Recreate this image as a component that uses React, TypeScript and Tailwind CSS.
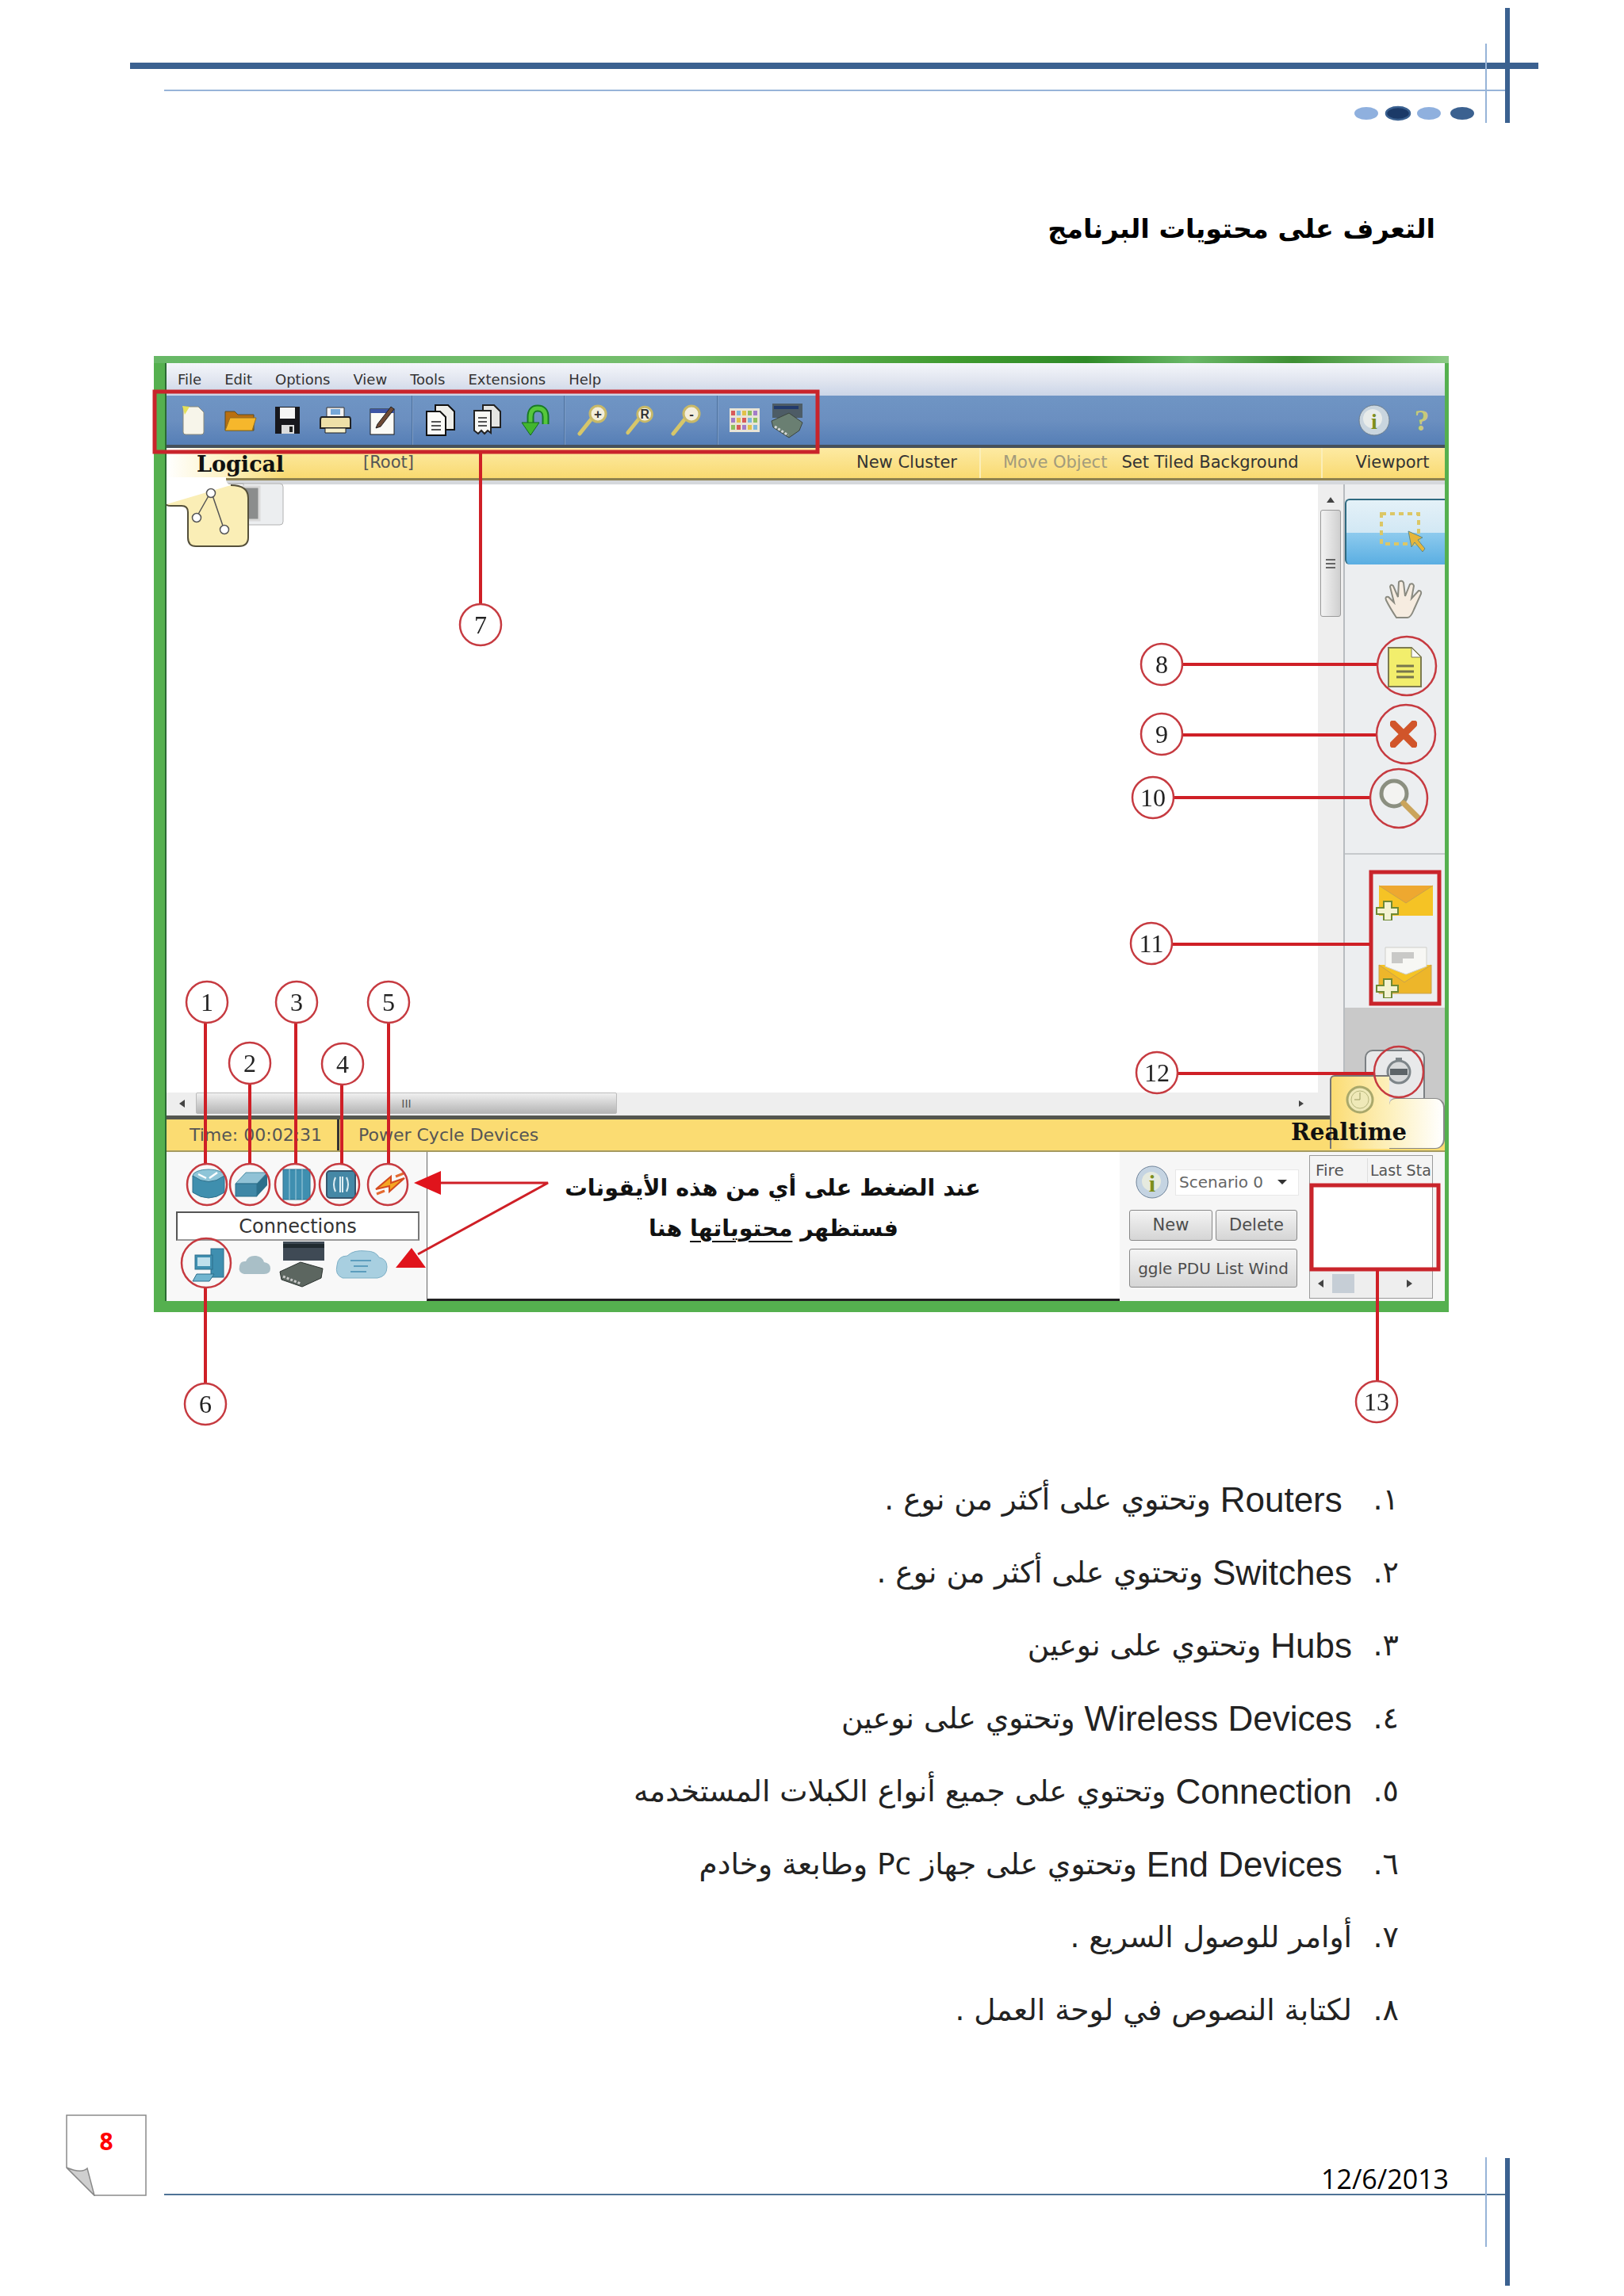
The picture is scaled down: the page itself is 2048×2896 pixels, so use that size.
import React from "react";

const F = ({ c = "", children, v }: { c?: string; children: React.ReactNode; v: string }) => (
  <svg viewBox={v} className={"shrink-0 " + c}>{children}</svg>
);

const Sep = ({ c }: { c: string }) => <div className={"w-[2px] h-full shrink-0 bg-[#4c719f] border-r border-[#7d9cc5] " + c} />;

function Zoomer({ sign, c }: { sign: string; c: string }) {
  return (
    <F v="0 0 43 40" c={c}>
      <path d="M4 37 L20 17" stroke="#d6c66a" strokeWidth="5" strokeLinecap="round" />
      <circle cx="27" cy="12" r="10" fill="#f3eedc" stroke="#c8b968" strokeWidth="3" />
      <text x="27" y="18" textAnchor="middle" fontSize="17" fontWeight="700" fill="#333" fontFamily="Liberation Sans">{sign}</text>
    </F>
  );
}

function Toolbar() {
  return (
    <div className="h-[66px] shrink-0 flex items-center bg-gradient-to-b from-[#6f95c4] via-[#6b8fc0] to-[#567fb6] border-b-[4px] border-[#46505a]">
      <F v="0 0 31 38" c="w-[31px] h-[38px] ml-[18px]">
        <path d="M3 2 H22 L29 9 V34 Q29 37 26 37 H6 Q3 37 3 34 Z" fill="#f7f5ea" stroke="#8a8a7a" />
        <path d="M2 1 L11 2 L5 12 Z" fill="#e4e05a" />
      </F>
      <F v="0 0 42 34" c="w-[42px] h-[34px] ml-[23px]">
        <path d="M2 6 H14 L18 10 H38 V30 H2 Z" fill="#b86f10" stroke="#5d4a20" />
        <path d="M2 30 L8 14 H41 L36 30 Z" fill="#f6b72c" stroke="#94701f" />
      </F>
      <F v="0 0 33 36" c="w-[33px] h-[36px] ml-[22px]">
        <path d="M1 1 H32 V35 H1 Z" fill="#17171c" />
        <path d="M7 2 H26 V16 H7 Z" fill="#f4f4f4" />
        <path d="M9 24 H25 V35 H9 Z" fill="#dcdcdc" />
        <rect x="19" y="26" width="4" height="7" fill="#222" />
      </F>
      <F v="0 0 40 36" c="w-[40px] h-[36px] ml-[24px]">
        <path d="M9 2 H31 V14 H9 Z" fill="#f2f2f2" stroke="#333" />
        <rect x="14" y="4" width="12" height="7" fill="#76a8d8" />
        <path d="M3 14 H37 Q39 14 39 18 V28 H1 V18 Q1 14 3 14 Z" fill="#eee0a8" stroke="#222" strokeWidth="2" />
        <path d="M7 28 H33 V34 H7 Z" fill="#f6f0cc" stroke="#222" />
      </F>
      <F v="0 0 32 38" c="w-[32px] h-[38px] ml-[23px]">
        <rect x="1" y="5" width="30" height="32" fill="#fbfbf6" stroke="#1a1a1a" />
        <rect x="1" y="5" width="30" height="5" fill="#3d55a5" />
        <path d="M10 24 L27 2 L31 5 L14 27 L8 29 Z" fill="#6e4a35" stroke="#222" />
      </F>
      <Sep c="ml-[21px]" />
      <F v="0 0 40 42" c="w-[40px] h-[42px] ml-[14px]">
        <path d="M14 2 H30 L38 10 V33 H14 Z" fill="#eeeeea" stroke="#111" strokeWidth="2" />
        <path d="M3 10 H20 L27 17 V40 H3 Z" fill="#fbfbf8" stroke="#111" strokeWidth="2" />
        <path d="M9 23 H21 M9 28 H21 M9 33 H21" stroke="#555" strokeWidth="2" />
      </F>
      <F v="0 0 38 42" c="w-[38px] h-[42px] ml-[20px]">
        <path d="M14 2 H28 L36 10 V30 H14 Z" fill="#e5e5e2" stroke="#222" strokeWidth="2" />
        <path d="M3 9 H24 V37 L20 34 L16 38 L12 34 L8 38 L3 34 Z" fill="#f8f8f5" stroke="#222" strokeWidth="2" />
        <path d="M8 18 H19 M8 23 H19 M8 28 H19" stroke="#555" strokeWidth="2" />
      </F>
      <F v="0 0 40 42" c="w-[40px] h-[42px] ml-[23px]">
        <path d="M13 29 V17 Q13 6 22 6 Q32 6 32 17 V26" fill="none" stroke="#177a25" strokeWidth="9" />
        <path d="M13 29 V17 Q13 6 22 6 Q32 6 32 17 V26" fill="none" stroke="#56c73c" strokeWidth="5" />
        <path d="M2 24 H24 L13 40 Z" fill="#42b52f" stroke="#146b20" />
      </F>
      <Sep c="ml-[15px]" />
      <Zoomer sign="+" c="w-[43px] h-[40px] ml-[14px]" />
      <Zoomer sign="R" c="w-[40px] h-[40px] ml-[18px]" />
      <Zoomer sign="-" c="w-[43px] h-[40px] ml-[17px]" />
      <Sep c="ml-[16px]" />
      <F v="0 0 38 30" c="w-[38px] h-[30px] ml-[14px]">
        <rect width="38" height="30" fill="#e8e4d6" />
        {["#d85a5a", "#7db7dc", "#e0c24a", "#8fbf5f", "#a37cc9"].map((col, i) => (
          <g key={i}>
            <rect x={2 + i * 7} y="3" width="5" height="6" fill={col} />
            <rect x={2 + i * 7} y="12" width="5" height="6" fill={["#a37cc9", "#e0c24a", "#d85a5a", "#7db7dc", "#8fbf5f"][i]} />
            <rect x={2 + i * 7} y="21" width="5" height="6" fill={["#8fbf5f", "#d85a5a", "#a37cc9", "#e0c24a", "#7db7dc"][i]} />
          </g>
        ))}
      </F>
      <F v="0 0 43 46" c="w-[43px] h-[46px] ml-[13px]">
        <path d="M3 2 H41 V20 H3 Z" fill="#4d5c66" />
        <path d="M5 5 H36 V9 H5 Z" fill="#223a6b" />
        <path d="M2 24 L24 14 L41 26 L37 36 L24 45 L4 32 Z" fill="#6a7f72" stroke="#3b453f" />
        <path d="M6 31 L23 42" stroke="#d8d8d8" strokeWidth="3" strokeDasharray="3 2" />
      </F>
      <F v="0 0 40 40" c="w-[40px] h-[40px] ml-auto">
        <circle cx="20" cy="20" r="19" fill="#c9d5de" stroke="#6b7d8d" />
        <circle cx="18" cy="18" r="12" fill="#e8ecea" />
        <text x="20" y="31" textAnchor="middle" fontSize="28" fontWeight="700" fill="#7d8f1c" fontFamily="Liberation Serif">i</text>
      </F>
      <span className="ml-[26px] mr-[15px] w-[28px] text-center font-['Liberation_Serif'] font-bold text-[38px] leading-none text-[#c7c97a]">?</span>
    </div>
  );
}

function Sidebar() {
  return (
    <div className="w-[128px] shrink-0 flex flex-col bg-[#eceef0] border-l-2 border-[#b8bcc0]">
      <div className="mt-[18px] h-[83px] shrink-0 bg-[linear-gradient(#e4f1f8_0%,#d2e8f4_50%,#8ecbee_50%,#5aaee2_100%)] rounded-tl-[6px] rounded-bl-[6px] border-t-2 border-l-2 border-[#2f6a80] flex items-center">
        <F v="0 0 58 52" c="w-[58px] h-[52px] ml-[42px]">
          <rect x="2" y="2" width="47" height="38" fill="none" stroke="#dcc766" strokeWidth="4" strokeDasharray="6 5" />
          <path d="M36 24 L40 44 L44 38 L54 50 L57 46 L48 35 L54 32 Z" fill="#e6b63a" stroke="#5d8a8d" />
        </F>
      </div>
      <F v="0 0 53 50" c="w-[53px] h-[50px] ml-[49px] mt-[19px]">
        <path d="M16 48 Q8 36 3 26 Q1 21 6 22 L13 29 L8 9 Q9 5 12 8 L18 22 L19 3 Q23 0 25 4 L27 21 L33 6 Q37 4 38 8 L35 24 L44 14 Q48 14 47 18 L38 38 Q34 48 30 48 Z" fill="#f6ece0" stroke="#8a8a80" strokeWidth="2" />
      </F>
      <F v="0 0 43 51" c="w-[43px] h-[51px] ml-[54px] mt-[35px]">
        <path d="M1 1 H30 L42 13 V50 H1 Z" fill="#f2ee6c" stroke="#7d7b50" strokeWidth="2" />
        <path d="M30 1 V13 H42 Z" fill="#fafafa" stroke="#7d7b50" />
        <path d="M11 24 H33 M11 31 H33 M11 38 H33" stroke="#77764d" strokeWidth="3" />
      </F>
      <F v="0 0 34 34" c="w-[34px] h-[34px] ml-[57px] mt-[42px]">
        <path d="M4 4 L30 30 M30 4 L4 30" stroke="#d1552a" strokeWidth="9" strokeLinecap="round" />
      </F>
      <F v="0 0 54 54" c="w-[54px] h-[54px] ml-[42px] mt-[38px]">
        <circle cx="20" cy="20" r="16" fill="#f3f3f1" stroke="#8b8f80" strokeWidth="5" />
        <path d="M32 32 L50 50" stroke="#caa45b" strokeWidth="7" strokeLinecap="round" />
      </F>
      <div className="mt-[41px] h-[2px] shrink-0 bg-[#c6c9cc]" />
      <F v="0 0 72 46" c="w-[72px] h-[46px] ml-[39px] mt-[37px]">
        <rect x="4" y="2" width="68" height="38" fill="#f5c325" />
        <path d="M4 2 L38 24 L72 2" fill="#eea830" stroke="#caa24b" />
        <path d="M10 22 H20 V30 H28 V38 H20 V46 H10 V38 H1 V30 H10 Z" fill="#f3f2d2" stroke="#6f8a34" strokeWidth="2" />
      </F>
      <F v="0 0 72 66" c="w-[72px] h-[66px] ml-[39px] mt-[32px]">
        <rect x="4" y="24" width="66" height="36" fill="#f5c325" />
        <path d="M4 24 L36 46 L70 24 L70 60 L4 60 Z" fill="#edb62a" stroke="#caa24b" />
        <path d="M12 2 H64 V26 L38 36 L12 26 Z" fill="#f7f7f4" stroke="#cfcfca" />
        <path d="M20 8 H48 V16 H34 V22 H20 Z" fill="#c9c9c7" />
        <path d="M10 42 H20 V50 H28 V58 H20 V66 H10 V58 H1 V50 H10 Z" fill="#f3f2d2" stroke="#6f8a34" strokeWidth="2" />
      </F>
      <div className="mt-[12px] flex-1 bg-[#c9c9c9] overflow-hidden">
        <div className="mt-[53px] ml-[25px] w-[76px] h-[70px] rounded-[10px] border-2 border-[#7b8083] bg-[#e8e9ea] flex justify-center pt-[6px]">
          <F v="0 0 40 40" c="w-[40px] h-[40px] ml-[10px]">
            <circle cx="20" cy="20" r="14" fill="#d8dadb" stroke="#7d8589" strokeWidth="3" />
            <rect x="9" y="16" width="22" height="8" fill="#5d6468" />
            <rect x="16" y="2" width="8" height="5" fill="#7d8589" />
          </F>
        </div>
      </div>
    </div>
  );
}

function Canvas() {
  return (
    <div className="flex-1 flex flex-col min-w-0">
      <div className="flex-1 flex min-h-0">
        <div className="relative flex-1 bg-white">
          <F v="0 0 152 90" c="absolute left-[-3px] top-[-9px] w-[152px] h-[90px]">
            <path d="M78 8 H146 Q150 8 150 12 V56 Q150 60 146 60 H100 V8 Z" fill="#eceef0" stroke="#b2b2b2" />
            <rect x="84" y="12" width="36" height="42" fill="#8b8d8d" stroke="#dadada" strokeWidth="3" />
            <path d="M3 0 H78 V2 Q78 8 84 10 Q106 10 106 26 V76 Q106 87 94 87 H40 Q30 87 30 76 V44 Q30 36 22 36 H8 Q3 36 3 28 Z" fill="#fff" stroke="none" />
            <path d="M3 34 Q3 36 8 36 H22 Q30 36 30 44 V76 Q30 87 40 87 H94 Q106 87 106 76 V26 Q106 10 84 10" fill="#faeeb6" stroke="#55503a" strokeWidth="2" />
            <path d="M58 20 L41 50 M60 20 L75 64" stroke="#555" strokeWidth="1.5" />
            <circle cx="59" cy="20" r="5.5" fill="#fff" stroke="#555" strokeWidth="1.5" />
            <circle cx="41" cy="51" r="5.5" fill="#fff" stroke="#555" strokeWidth="1.5" />
            <circle cx="76" cy="66" r="5.5" fill="#fff" stroke="#555" strokeWidth="1.5" />
          </F>
        </div>
        <div className="w-[32px] shrink-0 bg-[#eeeeee] flex flex-col items-center">
          <span className="mt-[16px] h-0 w-0 border-x-[5px] border-b-[7px] border-x-transparent border-b-[#444]" />
          <div className="mt-[9px] w-[26px] h-[135px] rounded-[3px] border border-[#9a9a9a] bg-gradient-to-r from-[#f4f4f4] to-[#cfcfcf] flex flex-col items-center justify-center gap-[3px]">
            <span className="w-[12px] h-[2px] bg-[#666]" />
            <span className="w-[12px] h-[2px] bg-[#666]" />
            <span className="w-[12px] h-[2px] bg-[#666]" />
          </div>
        </div>
      </div>
      <div className="h-[27px] shrink-0 bg-[#eeeeee] flex items-center relative">
        <span className="ml-[16px] h-0 w-0 border-y-[5px] border-r-[7px] border-y-transparent border-r-[#444]" />
        <div className="ml-[14px] w-[531px] h-full bg-gradient-to-b from-[#f0f0f0] to-[#b5b5b5] border border-[#bbbbbb] rounded-[2px] flex items-center justify-center text-[14px] leading-none text-[#555] font-['DejaVu_Sans']">III</div>
        <span className="ml-[860px] h-0 w-0 border-y-[4px] border-l-[6px] border-y-transparent border-l-[#444]" />
      </div>
      <div className="h-[2px] shrink-0 bg-[#eeeeee]" />
      <div className="h-[5px] shrink-0 bg-[#555750]" />
    </div>
  );
}

function DevicePanel() {
  return (
    <div className="w-[328px] shrink-0 bg-[#f8f8f8] flex flex-col">
      <div className="flex items-center mt-[20px] h-[42px] shrink-0">
        <F v="0 0 42 40" c="w-[42px] h-[40px] ml-[32px]">
          <ellipse cx="21" cy="9" rx="20" ry="8" fill="#8ec5d8" stroke="#4f8fa6" />
          <path d="M1 9 V30 Q21 44 41 30 V9 Q21 24 1 9 Z" fill="#3f8fae" stroke="#2c6f8b" />
          <path d="M8 7 L18 12 M32 5 L22 12" stroke="#fff" strokeWidth="2.5" />
        </F>
        <F v="0 0 42 34" c="w-[42px] h-[34px] ml-[12px]">
          <path d="M14 2 H41 L28 16 H1 Z" fill="#91c2d6" stroke="#4f8fa6" />
          <path d="M1 16 H28 V32 H1 Z" fill="#3f87a6" stroke="#2c6f8b" />
          <path d="M28 16 L41 2 V18 L28 32 Z" fill="#2c6f8b" />
        </F>
        <F v="0 0 42 42" c="w-[42px] h-[42px] ml-[15px]">
          <rect x="4" y="2" width="34" height="38" fill="#3f8fb0" stroke="#2c6f8b" />
          <path d="M12 2 V40 M20 2 V40 M28 2 V40" stroke="#83b9cd" strokeWidth="1.5" />
        </F>
        <F v="0 0 42 40" c="w-[42px] h-[40px] ml-[14px]">
          <rect x="3" y="3" width="36" height="34" rx="4" fill="#4588a6" stroke="#35566e" strokeWidth="2" />
          <path d="M14 11 Q10 20 14 29 M28 11 Q32 20 28 29" fill="none" stroke="#dfeef4" strokeWidth="2" />
          <path d="M20 10 V30 M23 10 V30" stroke="#dfeef4" strokeWidth="2" />
        </F>
        <F v="0 0 42 36" c="w-[42px] h-[36px] ml-[20px]">
          <path d="M3 24 L22 8 L22 16 L39 10 L20 27 L20 20 Z" fill="#f5a623" stroke="#d44a20" strokeWidth="2" />
          <path d="M4 30 L14 26 M28 8 L38 4" stroke="#e46a30" strokeWidth="3" />
        </F>
      </div>
      <div className="mt-[13px] ml-[12px] w-[307px] h-[37px] shrink-0 border-2 border-[#555] border-b-[#999] border-r-[#777] bg-white flex items-center justify-center font-['DejaVu_Sans'] text-[24px] text-[#333]">Connections</div>
      <div className="flex items-center mt-[1px]">
        <F v="0 0 44 44" c="w-[44px] h-[44px] ml-[32px]">
          <rect x="24" y="2" width="16" height="36" fill="#3f8fb0" stroke="#2c6f8b" />
          <rect x="4" y="10" width="22" height="18" fill="#3f8fb0" stroke="#2c6f8b" />
          <rect x="7" y="13" width="16" height="11" fill="#bfe0ec" />
          <path d="M6 34 H28 L22 43 H1 Z" fill="#72b6d0" stroke="#2c6f8b" />
        </F>
        <F v="0 0 42 28" c="w-[42px] h-[28px] ml-[14px]">
          <path d="M8 26 Q0 24 2 16 Q3 9 10 10 Q13 2 23 3 Q31 4 33 11 Q41 12 41 19 Q41 26 33 26 Z" fill="#a9bfc7" />
        </F>
        <F v="0 0 61 58" c="w-[61px] h-[58px] ml-[9px]">
          <rect x="6" y="0" width="52" height="24" fill="#3f4a55" />
          <rect x="6" y="3" width="52" height="5" fill="#202a30" />
          <path d="M2 38 L28 26 L56 34 L54 46 L30 57 L4 48 Z" fill="#5c6660" stroke="#2c3330" />
          <path d="M6 44 L28 53" stroke="#c8c8c8" strokeWidth="3" strokeDasharray="3 2" />
        </F>
        <F v="0 0 67 38" c="w-[67px] h-[38px] ml-[10px]">
          <path d="M10 36 Q0 32 3 20 Q4 8 16 8 Q24 0 40 2 Q52 2 56 10 Q66 12 66 22 Q66 34 54 36 Z" fill="#a8cfe0" stroke="#7fb0c6" />
          <path d="M20 14 H46 M24 21 H42 M20 28 H40" stroke="#5c9dbd" strokeWidth="2" />
        </F>
      </div>
    </div>
  );
}

function ScenarioPanel() {
  return (
    <div className="w-[235px] shrink-0 bg-[#f6f6f6] flex flex-col pl-[12px] font-['DejaVu_Sans'] text-[#4d4d4d]">
      <div className="flex items-center mt-[17px] h-[42px]">
        <F v="0 0 43 42" c="w-[43px] h-[42px] ml-[8px]">
          <circle cx="21" cy="21" r="20" fill="#c5d4e2" stroke="#70849a" />
          <circle cx="20" cy="20" r="12" fill="#e6eadf" />
          <text x="21" y="33" textAnchor="middle" fontSize="30" fontWeight="700" fill="#7d8f1c" fontFamily="Liberation Serif">i</text>
        </F>
        <div className="ml-[7px] w-[156px] h-[33px] bg-white border border-[#e8e8e8] flex items-center pl-[4px] text-[20px] whitespace-nowrap">
          <span className="text-[#666]">Scenario 0</span>
          <span className="ml-[18px] h-0 w-0 border-x-[6px] border-t-[6px] border-x-transparent border-t-[#333]" />
        </div>
      </div>
      <div className="flex mt-[14px] gap-[4px]">
        <div className="w-[105px] h-[39px] rounded-[3px] border border-[#888] bg-gradient-to-b from-[#f4f4f4] to-[#d5d5d5] flex items-center justify-center text-[21px]">New</div>
        <div className="w-[103px] h-[39px] rounded-[3px] border border-[#888] bg-gradient-to-b from-[#f4f4f4] to-[#d5d5d5] flex items-center justify-center text-[21px]">Delete</div>
      </div>
      <div className="mt-[10px] w-[212px] h-[49px] rounded-[3px] border border-[#888] bg-gradient-to-b from-[#f4f4f4] to-[#d5d5d5] flex items-center justify-center text-[20px] whitespace-nowrap">ggle PDU List Wind</div>
    </div>
  );
}

function PduTable() {
  return (
    <div className="flex-1 bg-[#f6f6f6] pl-[4px] pr-[15px] pt-[4px] pb-[3px] min-w-0">
      <div className="h-full border border-[#9a9a9a] bg-white flex flex-col font-['DejaVu_Sans'] text-[19px] text-[#555]">
        <div className="h-[36px] shrink-0 bg-[#f4f4f4] flex items-center whitespace-nowrap">
          <span className="ml-[7px] w-[66px] shrink-0 border-r border-[#ddd] text-[20px]">Fire</span>
          <span className="ml-[3px]">Last Sta</span>
        </div>
        <div className="flex-1" />
        <div className="h-[36px] shrink-0 bg-[#eeeeee] flex items-center">
          <span className="ml-[10px] h-0 w-0 border-y-[5px] border-r-[7px] border-y-transparent border-r-[#444]" />
          <span className="ml-[11px] w-[28px] h-[24px] bg-[#c6ced6]" />
          <span className="ml-[66px] h-0 w-0 border-y-[5px] border-l-[7px] border-y-transparent border-l-[#444]" />
        </div>
      </div>
    </div>
  );
}

const badges: [number, number, string][] = [
  [606, 788, "7"], [1465, 838, "8"], [1465, 926, "9"], [1454, 1006, "10"], [1452, 1190, "11"], [1459, 1353, "12"],
  [261, 1264, "1"], [315, 1341, "2"], [374, 1264, "3"], [432, 1342, "4"], [490, 1264, "5"], [259, 1771, "6"], [1736, 1768, "13"],
];

function Overlay() {
  return (
    <svg viewBox="194 449 1633 1352" className="absolute left-0 top-0 w-[1633px] h-[1352px] pointer-events-none overflow-visible">
      <g fill="none" stroke="#c9242b" strokeWidth="5">
        <rect x="195" y="494" width="836" height="76" />
        <rect x="1729" y="1100" width="86" height="166" />
        <rect x="1654" y="1495" width="160" height="106" />
      </g>
      <g stroke="#cf1f26" strokeWidth="4">
        <path d="M606 570 V762 M1490 838 H1737 M1490 927 H1737 M1479 1006 H1728 M1478 1191 H1728 M1485 1354 H1733" />
        <path d="M259 1290 V1468 M315 1366 V1468 M373 1290 V1468 M431 1368 V1468 M490 1290 V1468 M259 1624 V1744 M1737 1601 V1744" />
        <path d="M556 1492 H691 L527 1582" fill="none" strokeWidth="3" />
      </g>
      <path d="M522 1492 L556 1477 V1507 Z M519 1574 L499 1599 H537 Z" fill="#e0141c" />
      <g fill="none" stroke="#c63a40" strokeWidth="2.5">
        <ellipse cx="1774" cy="840" rx="37" ry="37" />
        <ellipse cx="1773" cy="926" rx="37" ry="37" />
        <ellipse cx="1764" cy="1007" rx="36" ry="37" />
        <ellipse cx="1764" cy="1352" rx="31" ry="32" />
        <ellipse cx="261" cy="1494" rx="25" ry="26" />
        <ellipse cx="315" cy="1494" rx="25" ry="26" />
        <ellipse cx="372" cy="1494" rx="25" ry="26" />
        <ellipse cx="428" cy="1494" rx="25" ry="26" />
        <ellipse cx="489" cy="1494" rx="25" ry="26" />
        <ellipse cx="260" cy="1593" rx="31" ry="31" />
      </g>
      {badges.map(([x, y, t]) => (
        <g key={t}>
          <ellipse cx={x} cy={y} rx="26" ry="26" fill="#fff" stroke="#c63a40" strokeWidth="2.5" />
          <text x={x} y={y + 11} textAnchor="middle" fontSize="32" fill="#222" fontFamily="Liberation Serif">{t}</text>
        </g>
      ))}
    </svg>
  );
}

function Figure() {
  return (
    <div className="relative ml-[194px] w-[1633px] h-[1352px] shrink-0 blur-[0.7px]">
      <div className="h-[1206px] flex flex-col bg-[#55b04f]">
        <div className="h-[9px] shrink-0 bg-[linear-gradient(90deg,#67b866_0%,#74bd6c_40%,#3f9a2f_62%,#2f8a28_72%,#6ab868_80%,#3e8f34_88%,#8ccb86_100%)]" />
        <div className="flex-1 flex flex-col min-h-0 ml-[14px] mr-[5px] mb-[14px] border-l-2 border-[#2a6a33] bg-white">
          <div className="h-[41px] shrink-0 bg-gradient-to-b from-[#f4f6fa] via-[#e2e6f0] to-[#cbd5e7] flex items-center font-['DejaVu_Sans'] text-[18px] text-[#333] pl-[14px] gap-[29px]">
            <span>File</span><span>Edit</span><span>Options</span><span>View</span><span>Tools</span><span>Extensions</span><span>Help</span>
          </div>
          <Toolbar />
          <div className="h-[41px] shrink-0 bg-gradient-to-b from-[#fdeaa2] to-[#f9da70] border-b-[3px] border-[#8e8250] flex items-center font-['DejaVu_Sans'] text-[21px] text-[#444] relative">
            <div className="w-[148px] h-full bg-gradient-to-r from-white via-[#fdf2c4] to-transparent flex items-center pl-[38px] pt-[5px] shrink-0">
              <span className="font-['DejaVu_Serif'] font-bold text-[27px] text-[#111] whitespace-nowrap">Logical</span>
            </div>
            <span className="ml-[100px] text-[#555]">[Root]</span>
            <span className="ml-[558px] whitespace-nowrap text-[#333]">New Cluster</span>
            <span className="ml-[28px] w-[2px] h-full bg-[#fbeeb8]" />
            <span className="ml-[28px] whitespace-nowrap text-[#a29b7c]">Move Object</span>
            <span className="ml-[18px] whitespace-nowrap text-[#333]">Set Tiled Background</span>
            <span className="ml-[28px] w-[2px] h-full bg-[#fbeeb8]" />
            <span className="ml-[42px] whitespace-nowrap text-[#333]">Viewport</span>
          </div>
          <div className="h-[5px] shrink-0 bg-[#d5d8dc]" />
          <div className="flex-1 flex min-h-0">
            <Canvas />
            <Sidebar />
          </div>
          <div className="h-[41px] shrink-0 bg-[#fbdc72] border-b-2 border-[#a59a60] flex items-center font-['DejaVu_Sans'] text-[22px] text-[#555]">
            <span className="ml-[29px] w-[186px] whitespace-nowrap">Time: 00:02:31</span>
            <span className="w-[3px] h-full bg-[#333]" />
            <span className="ml-[24px] whitespace-nowrap">Power Cycle Devices</span>
          </div>
          <div className="flex min-h-0 h-[188px] shrink-0">
            <DevicePanel />
            <div className="w-[874px] shrink-0 bg-white border-b-[3px] border-[#222] border-l border-l-[#666] flex flex-col items-center font-['DejaVu_Sans'] font-bold text-[#111] text-[28.5px] leading-none" dir="rtl">
              <p className="mt-[32px] ml-[-2px]">عند الضغط على أي من هذه الأيقونات</p>
              <p className="mt-[22px]">فستظهر <span className="underline underline-offset-[6px]">محتوياتها</span> هنا</p>
            </div>
            <ScenarioPanel />
            <PduTable />
          </div>
        </div>
      </div>
      <div className="absolute left-[1483px] top-[907px] w-[75px] h-[93px] rounded-tl-[6px] bg-gradient-to-r from-[#fbdc72] to-[#fdf0bc] border-l-2 border-t-2 border-[#777]">
        <F v="0 0 40 38" c="w-[40px] h-[38px] ml-[16px] mt-[10px]">
          <circle cx="20" cy="19" r="16" fill="#efe9b8" stroke="#a9a86b" strokeWidth="3" />
          <circle cx="20" cy="19" r="11" fill="none" stroke="#b9b87f" />
          <path d="M20 10 V19 H13" stroke="#9a9a60" fill="none" />
        </F>
      </div>
      <div className="absolute left-[1558px] top-[936px] w-[70px] h-[64px] rounded-r-[12px] rounded-tl-[8px] bg-gradient-to-r from-[#fdf0bc] to-white border-r-2 border-y border-[#888]" />
      <span className="absolute left-[1434px] top-[965px] font-['DejaVu_Serif'] font-bold text-[29px] leading-none text-[#111]">Realtime</span>
      <Overlay />
    </div>
  );
}

const items: [string, string, string][] = [
  ["١.", "\u00a0Routers", " وتحتوي على أكثر من نوع ."],
  ["٢.", "Switches", " وتحتوي على أكثر من نوع ."],
  ["٣.", "Hubs", " وتحتوي على نوعين"],
  ["٤.", "Wireless Devices", " وتحتوي على نوعين"],
  ["٥.", "Connection", " وتحتوي على جميع أنواع الكبلات المستخدمه"],
  ["٦.", "\u00a0End Devices", " وتحتوي على جهاز Pc وطابعة وخادم"],
  ["٧.", "", "أوامر للوصول السريع ."],
  ["٨.", "", "لكتابة النصوص في لوحة العمل ."],
];

export default function App() {
  return (
    <div className="w-[2048px] h-[2896px] bg-white flex flex-col overflow-hidden font-['Liberation_Sans','DejaVu_Sans',sans-serif] text-black">
      <svg viewBox="0 0 2048 160" className="w-[2048px] h-[160px] shrink-0">
        <rect x="164" y="79" width="1776" height="8" fill="#3b6190" />
        <rect x="207" y="113" width="1691" height="2" fill="#97b4d8" />
        <rect x="1873" y="55" width="2" height="100" fill="#97b4d8" />
        <rect x="1898" y="10" width="6" height="145" fill="#3b6190" />
        <ellipse cx="1723" cy="143" rx="15" ry="8" fill="#8fb0de" />
        <ellipse cx="1763" cy="143" rx="15" ry="8" fill="#1b3a68" stroke="#3b6190" strokeWidth="2.5" />
        <ellipse cx="1802" cy="143" rx="15" ry="8" fill="#8fb0de" />
        <ellipse cx="1844" cy="143" rx="15" ry="8" fill="#3b6190" />
      </svg>

      <div className="h-[289px] shrink-0 flex justify-end items-start pt-[100px] pr-[238px]" dir="ltr">
        <h1 className="font-bold text-[33.5px] leading-[58px] font-['DejaVu_Sans'] whitespace-nowrap" dir="rtl">التعرف على محتويات البرنامج</h1>
      </div>

      <Figure />

      <ol className="mt-[64px] flex flex-col gap-[39px] pr-[284px] text-[44px] leading-[53px] text-[#222]" dir="rtl">
        {items.map(([n, en, ar]) => (
          <li key={n} className="flex items-center h-[53px] whitespace-pre">
            <span className="w-[59px] shrink-0 text-[38px] font-['DejaVu_Sans']">{n}</span>
            <span>{en}</span>
            <span className="font-['DejaVu_Sans'] text-[37.5px]">{ar}</span>
          </li>
        ))}
      </ol>

      <div className="flex-1" />

      <div className="relative h-[182px] shrink-0">
        <svg viewBox="0 0 102 103" className="absolute left-[83px] top-[-47px] w-[102px] h-[103px]">
          <path d="M1 1 H101 V102 H36 L1 67 Z" fill="#fff" stroke="#8a8a8a" strokeWidth="1.5" />
          <path d="M1 67 Q20 75 27 68 L36 102 Z" fill="#cfcfcf" stroke="#8a8a8a" strokeWidth="1.5" />
        </svg>
        <span className="absolute left-[83px] top-[-33px] w-[102px] text-center font-['Open_Sans'] font-bold text-[30px] leading-[40px] text-[#ff0000]">8</span>
        <span className="absolute left-[1666px] top-[14px] font-['Open_Sans'] text-[34px] leading-[40px] text-black">12/6/2013</span>
        <svg viewBox="0 2714 2048 182" className="w-[2048px] h-[182px]">
          <rect x="207" y="2767" width="1691" height="2" fill="#4f7396" />
          <rect x="1873" y="2721" width="2" height="113" fill="#97b4d8" />
          <rect x="1898" y="2722" width="6" height="161" fill="#3b6190" />
        </svg>
      </div>
    </div>
  );
}
